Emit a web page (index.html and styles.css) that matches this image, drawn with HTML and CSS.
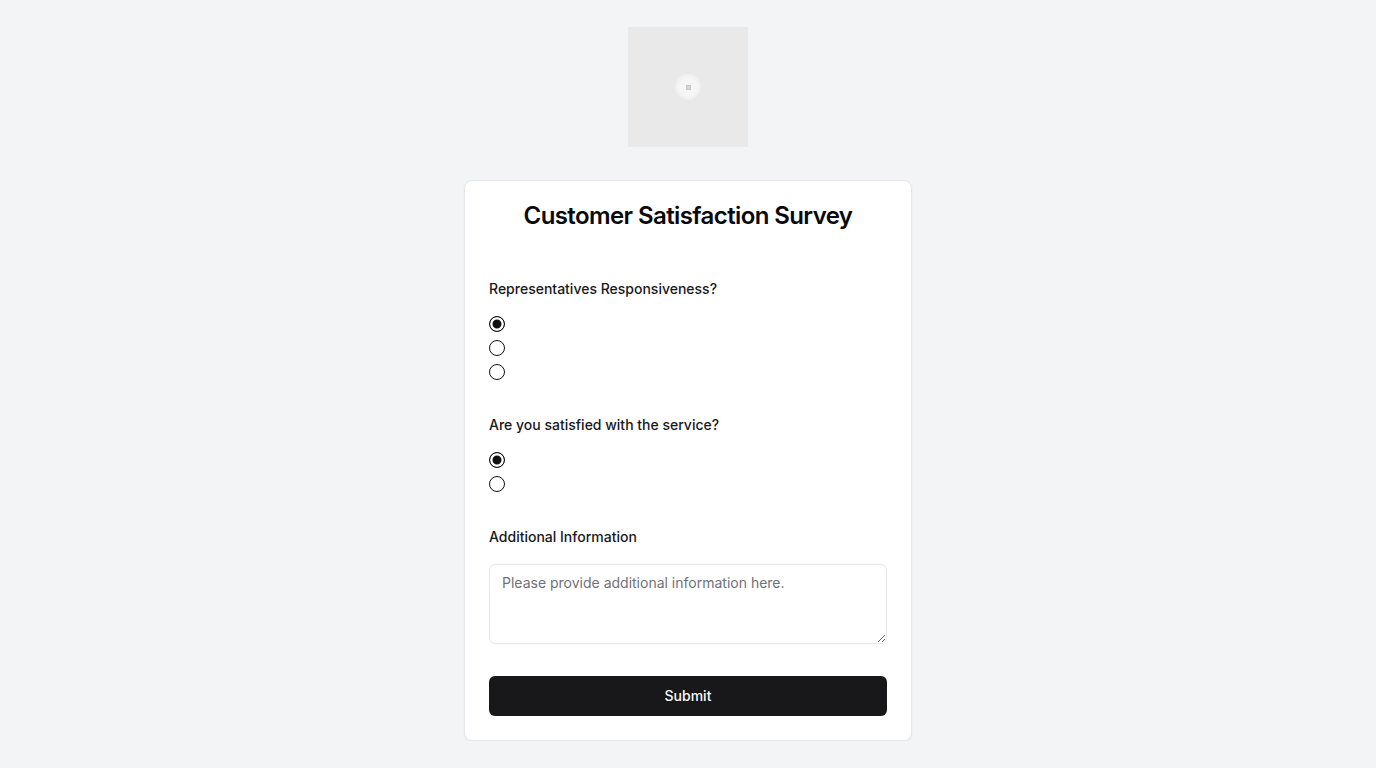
FILE: index.html
```html
<!DOCTYPE html>
<html lang="en">
<head>
<meta charset="utf-8">
<title>Customer Satisfaction Survey</title>
<link rel="stylesheet" href="styles.css">
</head>
<body>
<main class="page">
  <div class="logo" aria-label="Logo">
    <span class="logo-spinner"><span class="logo-dot"></span></span>
  </div>
  <form class="card">
    <h1 class="title">Customer Satisfaction Survey</h1>
    <section class="question">
      <label class="q-label">Representatives Responsiveness?</label>
      <div class="options">
        <label class="option"><input type="radio" name="resp" checked></label>
        <label class="option"><input type="radio" name="resp"></label>
        <label class="option"><input type="radio" name="resp"></label>
      </div>
    </section>
    <section class="question">
      <label class="q-label">Are you satisfied with the service?</label>
      <div class="options">
        <label class="option"><input type="radio" name="sat" checked></label>
        <label class="option"><input type="radio" name="sat"></label>
      </div>
    </section>
    <section class="question info">
      <label class="q-label" for="info">Additional Information</label>
      <textarea id="info" class="textarea" placeholder="Please provide additional information here."></textarea>
    </section>
    <button type="button" class="submit">Submit</button>
  </form>
</main>
</body>
</html>
```
FILE: styles.css
```css
* { box-sizing: border-box; }
html, body { margin: 0; padding: 0; }
body {
  background: #f3f4f6;
  font-family: Inter, "Noto Sans", "Liberation Sans", sans-serif;
  color: #09090b;
}
.page {
  display: flex;
  flex-direction: column;
  align-items: center;
  padding-top: 27px;
}
.logo {
  width: 120px;
  height: 120px;
  background: #e9e9e9;
  display: flex;
  align-items: center;
  justify-content: center;
  margin-bottom: 33px;
}
.logo-spinner {
  width: 26px;
  height: 26px;
  border-radius: 50%;
  background: radial-gradient(circle, #f6f6f6 0 45%, #efefef 70%, #e9e9e9 100%);
  display: flex;
  align-items: center;
  justify-content: center;
}
.logo-dot {
  width: 5px;
  height: 5px;
  background: #d4d4d4;
  border: 1px solid #c8c8c8;
}
.card {
  width: 448px;
  background: #fff;
  border: 1px solid #e5e7eb;
  border-radius: 8px;
  box-shadow: 0 1px 2px rgba(0,0,0,0.05);
  padding: 23px 24px 24px;
  display: flex;
  flex-direction: column;
}
.title {
  margin: 0;
  font-size: 24px;
  line-height: 24px;
  font-weight: 600;
  text-align: center;
  letter-spacing: -0.6px;
  color: #09090b;
}
.question {
  display: flex;
  flex-direction: column;
  margin-top: 54px;
}
.question + .question { margin-top: 34px; }
.q-label {
  font-size: 14px;
  line-height: 14px;
  font-weight: 500;
  color: #18181b;
}
.options {
  display: flex;
  flex-direction: column;
  margin-top: 16px;
}
.option {
  display: flex;
  align-items: center;
  height: 24px;
}
.option input {
  appearance: none;
  -webkit-appearance: none;
  margin: 0;
  width: 16px;
  height: 16px;
  border: 1px solid #111;
  border-radius: 50%;
  background: #fff;
}
.option input:checked {
  background: #111;
  box-shadow: inset 0 0 0 2.5px #fff;
}
.info .textarea {
  margin-top: 20px;
  width: 100%;
  height: 80px;
  border: 1px solid #e5e7eb;
  border-radius: 6px;
  padding: 8px 12px;
  font-family: inherit;
  font-size: 14px;
  line-height: 20px;
  color: #09090b;
  background: #fff;
  resize: vertical;
}
.textarea::placeholder { color: #71717a; }
.submit {
  margin-top: 32px;
  height: 40px;
  width: 100%;
  border: none;
  border-radius: 6px;
  background: #18181b;
  color: #fafafa;
  font-family: inherit;
  font-size: 14px;
  font-weight: 500;
  line-height: 20px;
  padding: 0 0 1px;
}
```
